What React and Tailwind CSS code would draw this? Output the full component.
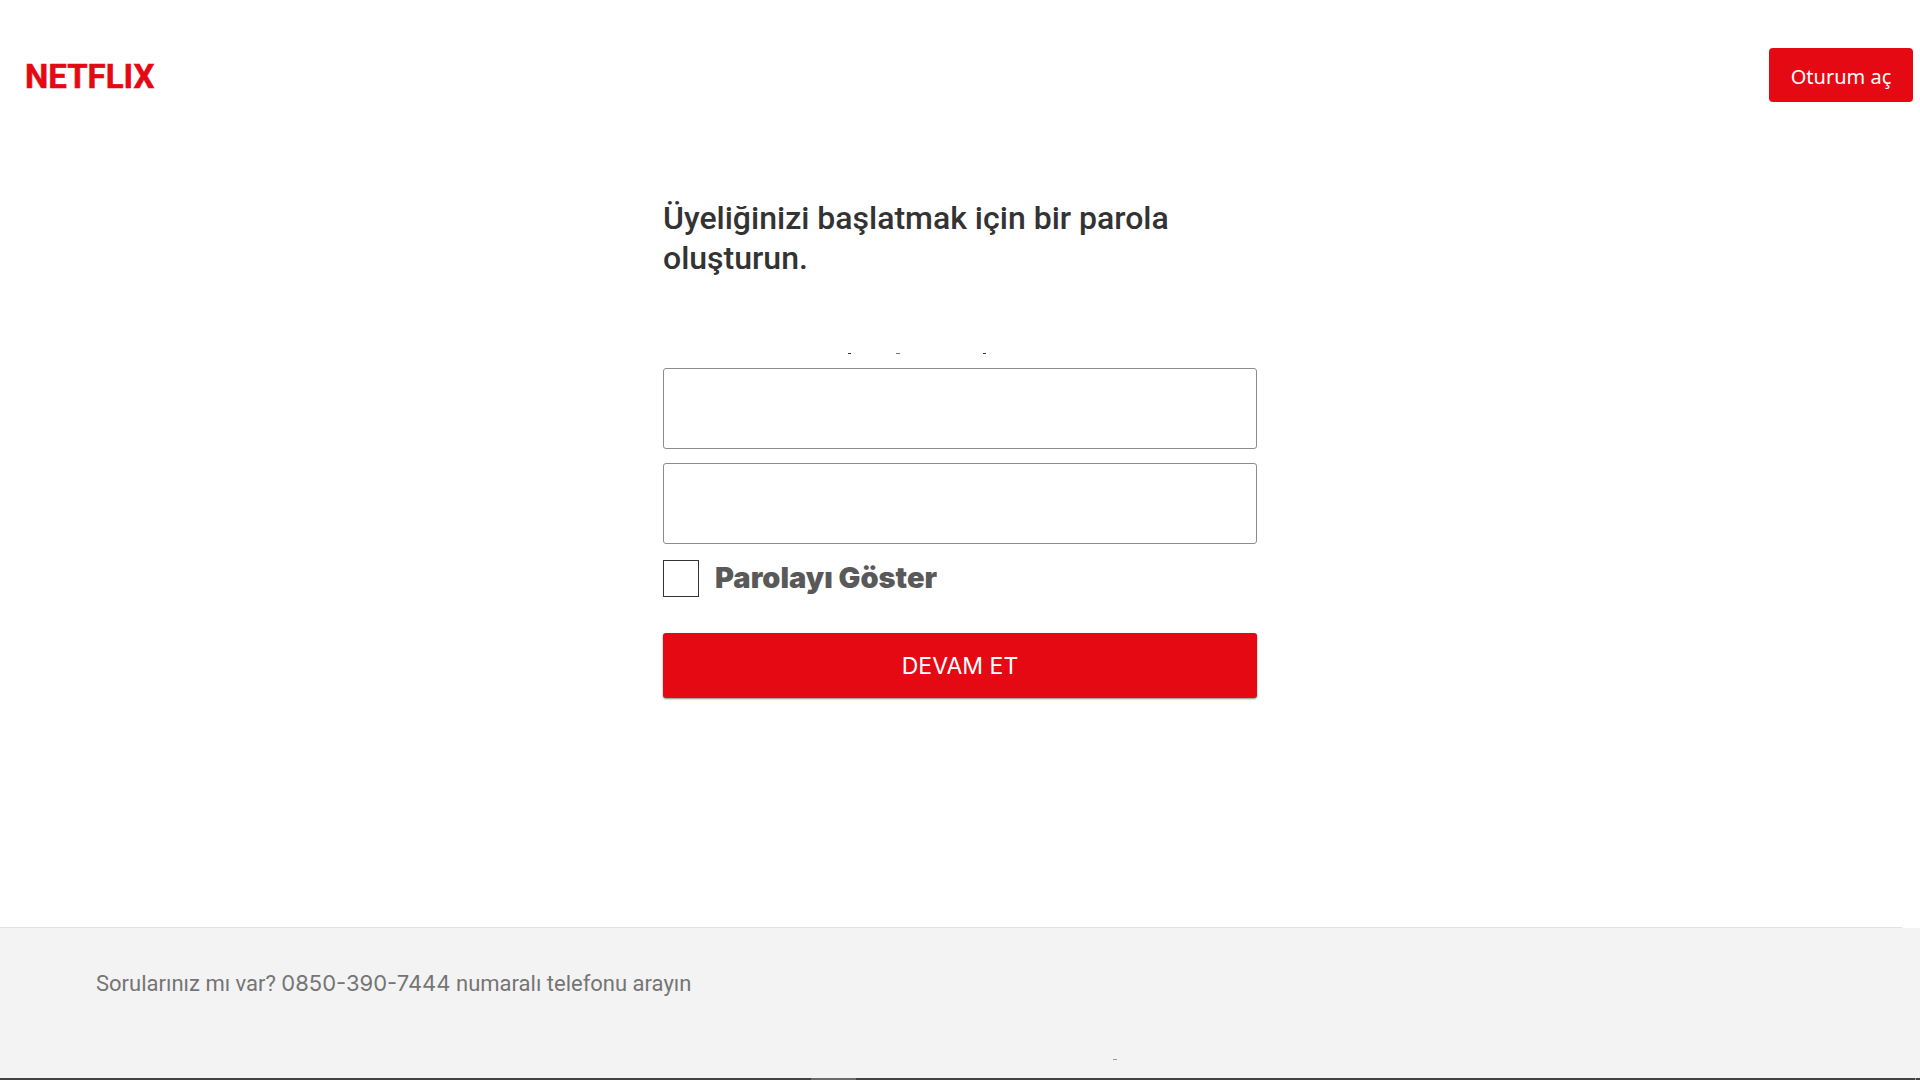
import { useState } from "react";

function Logo() {
  return (
    <a href="#" aria-label="Netflix" className="block">
      <svg width="140" height="44" viewBox="0 0 140 44" className="block">
        <text
          x="0"
          y="35"
          fill="#e50914"
          stroke="#e50914"
          strokeWidth="0.5"
          fontWeight="700"
          fontSize="33"
          fontFamily="Roboto, sans-serif"
        >
          NETFLIX
        </text>
      </svg>
    </a>
  );
}

function PasswordField({ label, shown }) {
  return (
    <input
      type={shown ? "text" : "password"}
      aria-label={label}
      className="block h-[81px] w-full rounded-[3px] border border-[#8c8c8c] bg-white px-4 text-2xl text-[#333333] outline-none"
    />
  );
}

export default function App() {
  const [shown, setShown] = useState(false);

  return (
    <div className="flex min-h-screen flex-col bg-white font-['Roboto',sans-serif] text-[#333333]">
      <header className="flex items-center justify-between pt-12 pr-[7px] pl-[25px]">
        <Logo />
        <button
          type="button"
          className="h-[54px] w-36 rounded-[4px] bg-[#e50914] pt-1 font-['Noto_Sans',sans-serif] text-[20px] leading-7 text-white"
        >
          Oturum aç
        </button>
      </header>

      <main className="mx-auto w-full max-w-[594px] grow pt-24">
        <h1 className="text-[32px] leading-10 font-medium">
          Üyeliğinizi başlatmak için bir parola oluşturun.
        </h1>

        <div aria-hidden="true" className="mt-[75px] flex h-px">
          <span className="ml-[185px] w-[3px] bg-[#333333]" />
          <span className="ml-[45px] w-1 bg-[#777777]" />
          <span className="ml-[83px] w-[3px] bg-[#333333]" />
        </div>

        <form className="mt-3.5" onSubmit={(e) => e.preventDefault()}>
          <div className="flex flex-col gap-3.5">
            <PasswordField label="Parola" shown={shown} />
            <PasswordField label="Parola (tekrar)" shown={shown} />
          </div>
          <label className="mt-4 flex w-fit gap-4">
            <input
              type="checkbox"
              checked={shown}
              onChange={(e) => setShown(e.target.checked)}
              className="h-[37px] w-9 appearance-none border border-[#333333] bg-white checked:bg-[#333333]"
            />
            <span className="font-['Inter',sans-serif] text-[29px] leading-9 font-black text-[#595959]">
              Parolayı Göster
            </span>
          </label>
          <button
            type="submit"
            className="mt-9 h-[65px] w-full rounded-[3px] bg-[#e50914] pt-0.5 font-['Inter',sans-serif] text-[23px] text-white shadow-[0_1px_2px_rgba(0,0,0,0.45)]"
          >
            DEVAM ET
          </button>
        </form>
      </main>

      <footer>
        <div className="mr-[18px] h-px bg-[#e2e2e2]" />
        <div className="h-[150px] bg-[#f3f3f3] pt-[39px]">
          <p className="px-24 text-[22px] leading-8 text-[#757575]">
            Sorularınız mı var?{" "}
            <a href="tel:0850-390-7444" className="font-['Inter',sans-serif]">
              0850-390-7444
            </a>{" "}
            numaralı telefonu arayın
          </p>
          <div aria-hidden="true" className="mt-[59px] ml-[1113px] h-px w-1 bg-[#999999]" />
        </div>
      </footer>
      <div aria-hidden="true" className="flex h-0.5 bg-[#434143]">
        <span className="ml-[811px] w-[45px] bg-[#6b6b6b]" />
        <span className="mr-1 ml-auto w-px bg-[#999999]" />
      </div>
    </div>
  );
}
